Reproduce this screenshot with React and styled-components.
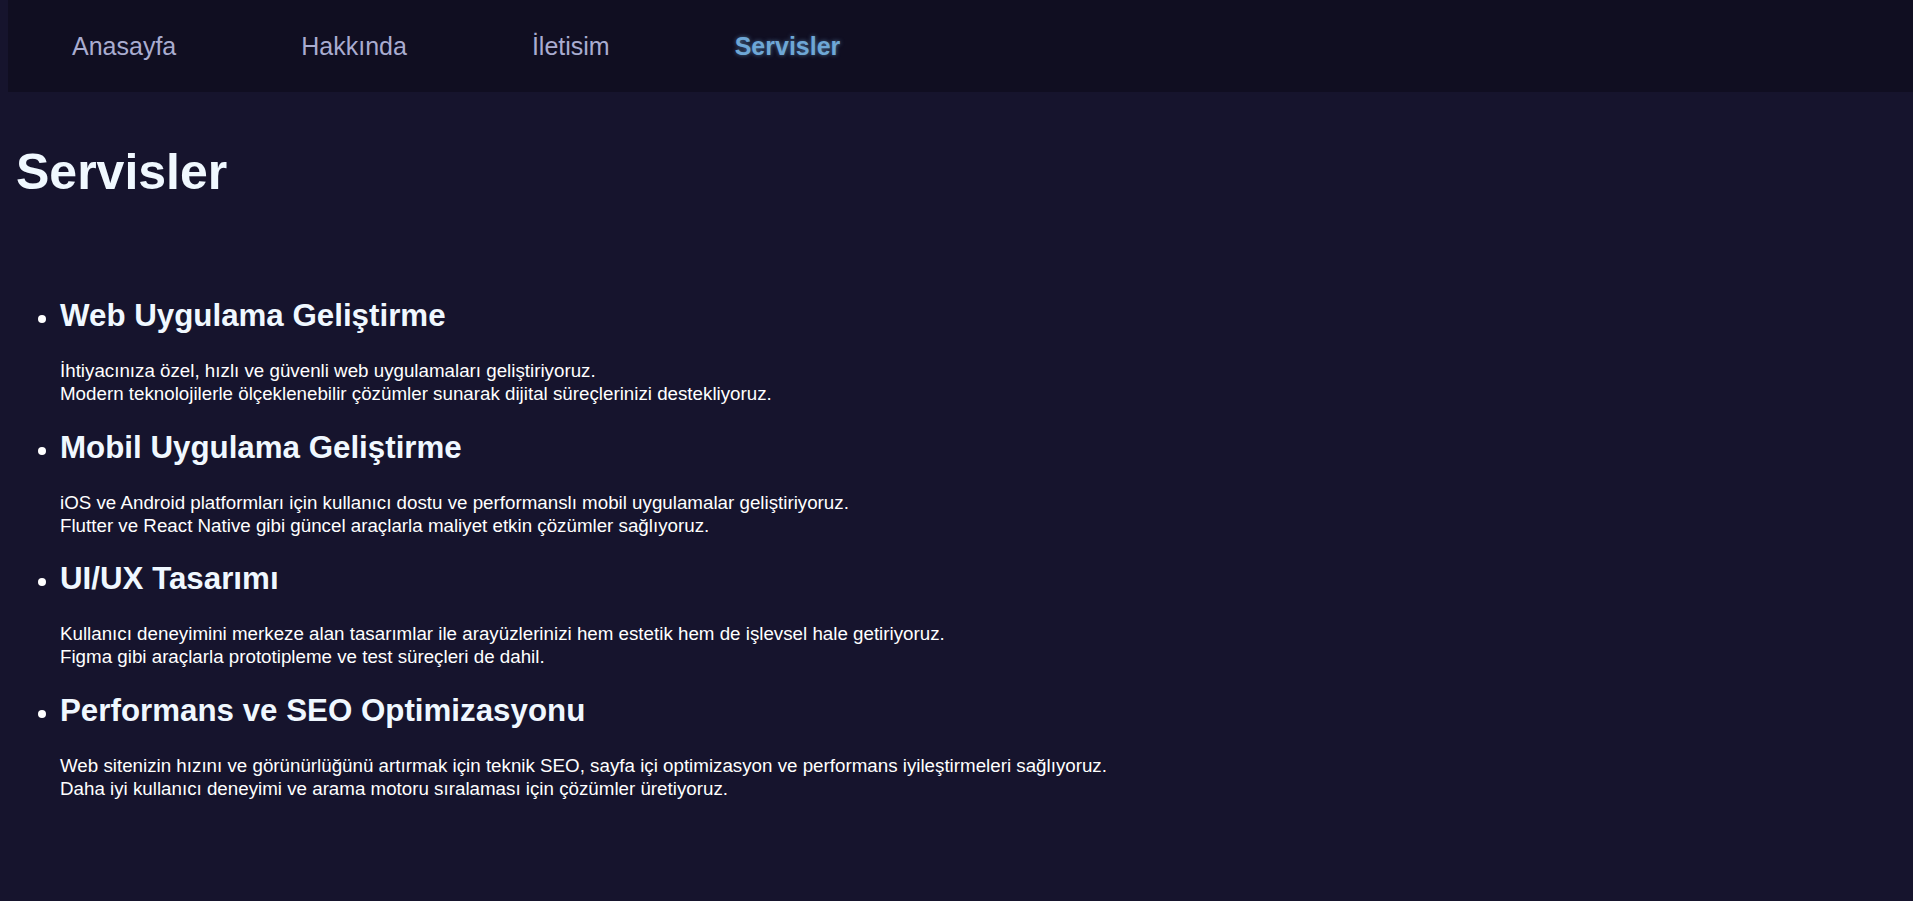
import { createGlobalStyle, styled } from "styled-components";

const GlobalStyle = createGlobalStyle`
  html, body {
    margin: 0;
    padding: 0;
    background-color: #16142d;
  }
  body {
    padding: 0 0 0 8px;
    font-family: "Liberation Sans", Arial, sans-serif;
    min-height: 901px;
  }
`;

const Nav = styled.nav`
  display: flex;
  align-items: center;
  height: 92px;
  background-color: #100e21;
  padding-left: 64px;
`;

const NavLink = styled.a`
  font-size: 25px;
  color: ${(p) => (p.$active ? "#6ea7d6" : "#a9acd0")};
  font-weight: ${(p) => (p.$active ? 700 : 400)};
  text-shadow: ${(p) => (p.$active ? "0 0 4px rgba(110, 167, 214, 0.6)" : "none")};
  text-decoration: none;
  margin-right: 125px;
  cursor: pointer;
`;

const Main = styled.main`
  padding: 51px 8px 0 8px;
  color: #ffffff;
`;

const Title = styled.h1`
  margin: 0;
  font-size: 50px;
  font-weight: 700;
  line-height: normal;
  color: #f0f8ff;
`;

const ServiceList = styled.ul`
  margin: 97px 0 0 0;
  padding-left: 44px;
  list-style: disc;
`;

const Service = styled.li`
  color: #ffffff;
  font-size: 25px;
  & + & {
    margin-top: 24.5px;
  }
`;

const ServiceTitle = styled.h3`
  margin: 0 0 25px;
  font-size: 31.3px;
  font-weight: 700;
  line-height: normal;
  color: #f0f8ff;
`;

const ServiceText = styled.p`
  margin: 0;
  font-size: 18.75px;
  line-height: 23px;
  color: #ffffff;
`;

const links = ["Anasayfa", "Hakkında", "İletisim", "Servisler"];

const services = [
  {
    title: "Web Uygulama Geliştirme",
    lines: [
      "İhtiyacınıza özel, hızlı ve güvenli web uygulamaları geliştiriyoruz.",
      "Modern teknolojilerle ölçeklenebilir çözümler sunarak dijital süreçlerinizi destekliyoruz.",
    ],
  },
  {
    title: "Mobil Uygulama Geliştirme",
    lines: [
      "iOS ve Android platformları için kullanıcı dostu ve performanslı mobil uygulamalar geliştiriyoruz.",
      "Flutter ve React Native gibi güncel araçlarla maliyet etkin çözümler sağlıyoruz.",
    ],
  },
  {
    title: "UI/UX Tasarımı",
    lines: [
      "Kullanıcı deneyimini merkeze alan tasarımlar ile arayüzlerinizi hem estetik hem de işlevsel hale getiriyoruz.",
      "Figma gibi araçlarla prototipleme ve test süreçleri de dahil.",
    ],
  },
  {
    title: "Performans ve SEO Optimizasyonu",
    lines: [
      "Web sitenizin hızını ve görünürlüğünü artırmak için teknik SEO, sayfa içi optimizasyon ve performans iyileştirmeleri sağlıyoruz.",
      "Daha iyi kullanıcı deneyimi ve arama motoru sıralaması için çözümler üretiyoruz.",
    ],
  },
];

function App() {
  return (
    <>
      <GlobalStyle />
      <Nav>
        {links.map((l) => (
          <NavLink key={l} $active={l === "Servisler"}>
            {l}
          </NavLink>
        ))}
      </Nav>
      <Main>
        <Title>Servisler</Title>
        <ServiceList>
          {services.map((s) => (
            <Service key={s.title}>
              <ServiceTitle>{s.title}</ServiceTitle>
              <ServiceText>
                {s.lines[0]}
                <br />
                {s.lines[1]}
              </ServiceText>
            </Service>
          ))}
        </ServiceList>
      </Main>
    </>
  );
}

export default App;
